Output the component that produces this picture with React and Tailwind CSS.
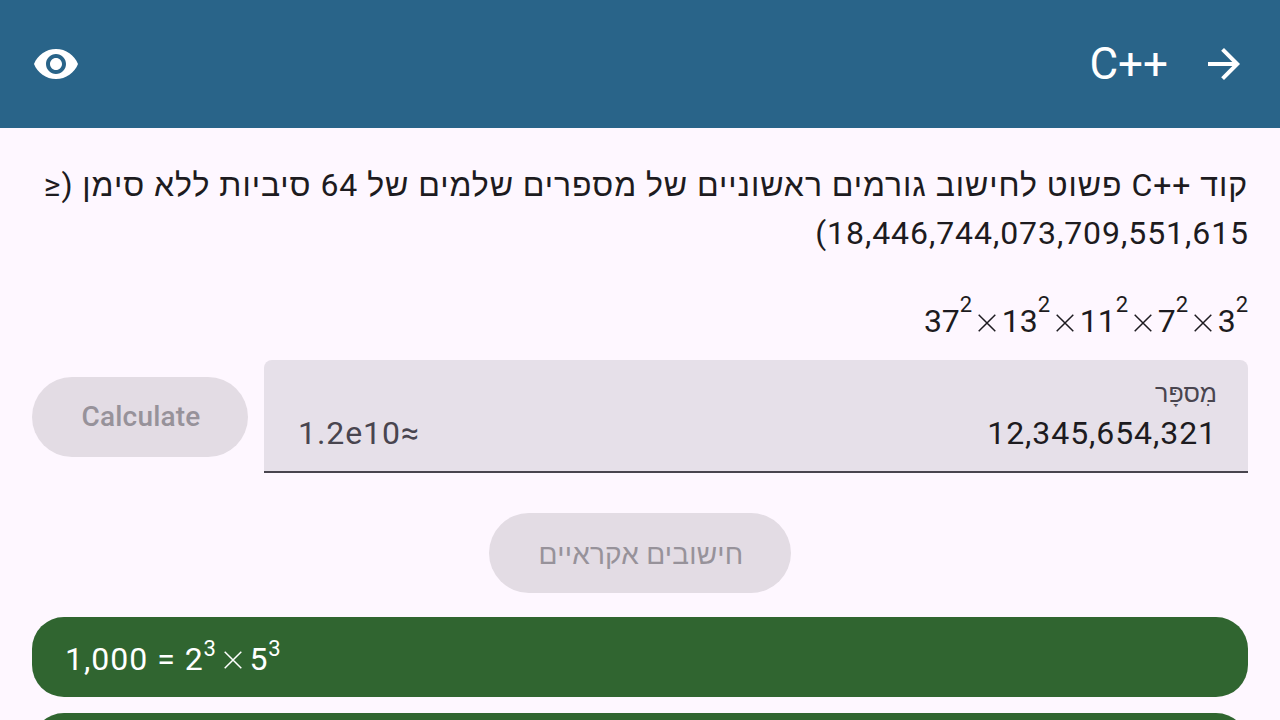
import React from "react";

function Times({ wide }) {
  return (
    <svg
      className={(wide ? "ml-[7.500px] mr-[7.500px]" : "ml-[5.600px] mr-[6px]") + " mt-[3.500px] h-[18px] w-[18px]"}
      viewBox="0 0 18 18"
      fill="none"
      stroke="currentColor"
      strokeWidth="1.5"
    >
      <path d="M.7.7 17.300 17.300M17.300.7.7 17.300" />
    </svg>
  );
}

function Product({ terms, wide }) {
  return (
    <span dir="ltr" className="flex items-center">
      {terms.map(([base, exp], i) => (
        <React.Fragment key={base}>
          {i > 0 && <Times wide={wide} />}
          <span className={wide ? "flex items-center tracking-[0.7px]" : "flex items-center"}>
            <span>{base}</span>
            <span className={(wide ? "top-[-10px]" : "top-[-16px]") + " relative text-[22px] leading-none"}>{exp}</span>
          </span>
        </React.Fragment>
      ))}
    </span>
  );
}

export default function App() {
  return (
    <div dir="rtl" className="flex h-[720px] w-[1280px] flex-col overflow-hidden bg-[#fef7ff] font-[Roboto,'Noto_Sans',sans-serif] text-[32px] text-[#1d1b20]">
      <header className="flex h-32 shrink-0 items-center justify-between bg-[#296489] px-8 text-white">
        <div className="flex items-center gap-8">
          <svg className="h-12 w-12" viewBox="0 0 24 24" fill="currentColor">
            <path transform="translate(24 0) scale(-1 1)" d="M20 11H7.830l5.590-5.590L12 4l-8 8 8 8 1.410-1.410L7.830 13H20z" />
          </svg>
          <span dir="ltr" className="text-[44px]">C++</span>
        </div>
        <svg className="h-12 w-12" viewBox="0 0 24 24" fill="currentColor">
          <path d="M12 4.500C7 4.500 2.730 7.610 1 12c1.730 4.390 6 7.500 11 7.500s9.270-3.110 11-7.500c-1.730-4.390-6-7.500-11-7.500zM12 17c-2.760 0-5-2.240-5-5s2.240-5 5-5 5 2.240 5 5-2.240 5-5 5zm0-8c-1.660 0-3 1.340-3 3s1.340 3 3 3 3-1.340 3-3-1.340-3-3-3z" />
        </svg>
      </header>
      <main className="flex flex-col px-8 pt-[33px]">
        <p className="h-24 leading-[48px] tracking-[0.940px]">
          <span className="block whitespace-nowrap">
            קוד <bdi dir="ltr">C++</bdi> פשוט לחישוב גורמים ראשוניים של מספרים שלמים של 64 סיביות ללא סימן (≤
          </span>
          <span className="-mr-px block whitespace-nowrap">18,446,744,073,709,551,615)</span>
        </p>
        <div className="mt-10 flex h-12 items-center">
          <Product terms={[["37", "2"], ["13", "2"], ["11", "2"], ["7", "2"], ["3", "2"]]} />
        </div>
        <div className="mt-[15px] flex items-center gap-4">
          <div className="flex h-[113px] w-[984px] flex-col rounded-t-lg border-b-2 border-[#49454f] bg-[#e6e0e9] px-8 pt-[17px]">
            <label className="-mr-px h-8 pt-px text-[25px] leading-8 text-[#49454f]">מִספָּר</label>
            <div className="flex h-12 items-center justify-between tracking-[0.930px]">
              <span dir="ltr" className="-mr-px">12,345,654,321</span>
              <span dir="ltr" className="ml-[2px] text-[#49454f]">1.2e10≈</span>
            </div>
          </div>
          <button className="h-20 w-[216px] rounded-full bg-[#e3dce4] pl-[2px] text-[28px] font-medium tracking-[0.200px] text-[#97929a]">Calculate</button>
        </div>
        <button className="mt-10 h-20 w-[302px] self-center rounded-full bg-[#e3dce4] pl-[2px] pt-[3px] text-[28px] tracking-[0.200px] text-[#97929a]">חישובים אקראיים</button>
        <div dir="ltr" className="mt-6 flex h-20 shrink-0 items-center rounded-[32px] bg-[#306530] px-[33px] pt-[3px] text-white">
          <span className="mr-[9px] tracking-[1px]">1,000 =</span>
          <Product wide terms={[["2", "3"], ["5", "3"]]} />
        </div>
        <div className="mt-4 h-20 shrink-0 rounded-[32px] bg-[#306530]" />
      </main>
    </div>
  );
}
